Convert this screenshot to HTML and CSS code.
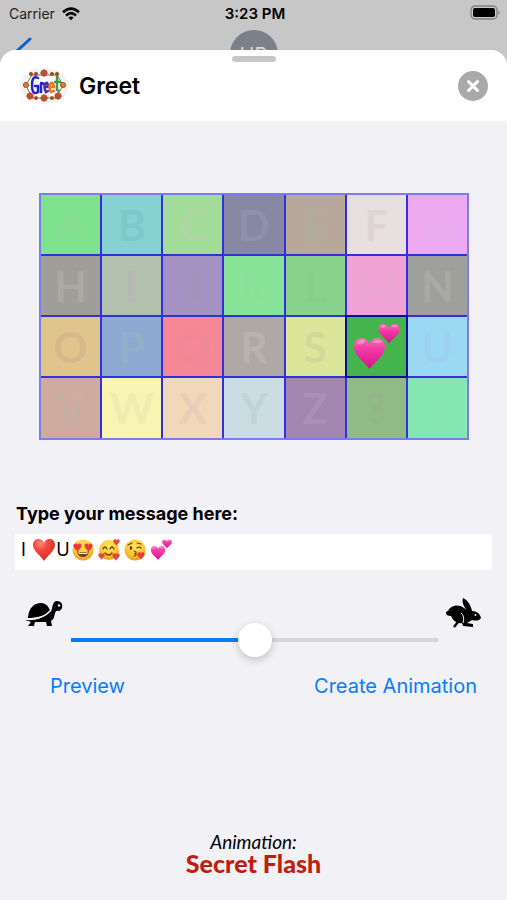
FILE: index.html
```
<!DOCTYPE html>
<html lang="en">
<head>
<meta charset="utf-8">
<meta name="viewport" content="width=device-width, initial-scale=1">
<title>Greet</title>
<link rel="stylesheet" href="styles.css">
</head>
<body>
<svg class="defs" aria-hidden="true">
  <defs>
    <radialGradient id="red" cx=".35" cy=".2" r=".8"><stop offset="0" stop-color="#ff8a7a"/><stop offset=".4" stop-color="#f2483c"/><stop offset="1" stop-color="#d92b25"/></radialGradient>
    <linearGradient id="pink" x1="0" y1="0" x2="0" y2="1"><stop offset="0" stop-color="#ff6fb8"/><stop offset=".35" stop-color="#f23aa6"/><stop offset="1" stop-color="#d8128a"/></linearGradient>
    <radialGradient id="yellow" cx=".5" cy=".3" r=".7"><stop offset="0" stop-color="#ffe65c"/><stop offset=".6" stop-color="#fdc935"/><stop offset="1" stop-color="#ef9c1c"/></radialGradient>
    <symbol id="heart" viewBox="0 0 24 24"><path d="M12 23C9 18 1 13 1 7C1 3 3.500 1 6.500 1C9 1 11 2.500 12 5C13 2.500 15 1 17.500 1C20.500 1 23 3 23 7C23 13 15 18 12 23Z"/></symbol>
    <symbol id="two-hearts" viewBox="0 0 48 48">
      <g fill="url(#pink)"><path d="M17.500 46C12 38 2 33 2 24C2 18.500 5 15 9.500 15C13 15 16 17 17.500 21C19 17 22 15 25.500 15C30 15 33 18.500 33 24C33 33 23 38 17.500 46Z"/><path d="M37 20.500C34 15 27 12 26.500 7C26.200 3.500 28 1 31 1C34 1 36 2.500 37 5C38 2.500 40 1 43 1C46 1 48 3.500 47.700 7C47 12.500 40 15.500 37 20.500Z"/></g>
      <g fill="#ffadd8" opacity=".6"><ellipse cx="9" cy="19" rx="4" ry="2" transform="rotate(-20 9 19)"/><ellipse cx="25.500" cy="18.500" rx="4" ry="1.600"/><ellipse cx="31" cy="3.500" rx="2.500" ry="1.100"/><ellipse cx="42.500" cy="3.200" rx="2.500" ry="1.100"/></g>
    </symbol>
    <symbol id="flower" viewBox="-5 -5 10 10"><g fill="#dd3b2b"><circle cy="-3" r="1.700"/><circle cy="3" r="1.700"/><circle cx="3" r="1.700"/><circle cx="-3" r="1.700"/><circle cx="2.100" cy="2.100" r="1.500"/><circle cx="-2.100" cy="2.100" r="1.500"/><circle cx="2.100" cy="-2.100" r="1.500"/><circle cx="-2.100" cy="-2.100" r="1.500"/></g><circle r="2" fill="#50802c"/></symbol>
  </defs>
</svg>

<header class="status">
  <div class="carrier">Carrier
    <svg width="18" height="14" viewBox="0 0 18 14" fill="none" stroke="#000" stroke-width="2.600" aria-hidden="true"><path d="M1 5.200Q9-2 17 5.200M4 8.400Q9 4 14 8.400"/><path d="M6.400 10.500Q9 8.300 11.600 10.500L9 13.300Z" fill="#000" stroke="none"/></svg>
  </div>
  <div class="time">3:23 PM</div>
  <svg class="battery" width="31" height="15" viewBox="0 0 31 15" role="img" aria-label="Battery full"><rect x="1" y="1" width="26" height="13" rx="4" fill="none" stroke="#808080" stroke-width="1.300"/><rect x="3" y="3" width="22" height="9" rx="2"/><path d="M28.500 5.200Q31 7.500 28.500 9.800Z" fill="#808080"/></svg>
  <svg class="back" width="18" height="26" viewBox="0 0 18 26" aria-hidden="true"><path d="M16 2L3 14L16 26" fill="none" stroke="#0a62cc" stroke-width="3" stroke-linecap="round"/></svg>
  <div class="avatar" aria-hidden="true">HB</div>
</header>

<main class="sheet">
  <div class="title-bar">
    <span class="grabber"></span>
    <svg class="logo" width="50" height="38" viewBox="0 0 50 38" role="img" aria-label="Greet logo">
      <ellipse cx="25" cy="19" rx="24.500" ry="18" fill="#f3f3f3"/>
      <path d="M7 18L13 8H38L44 18L37 31H13Z" fill="#fff" stroke="#66864b"/>
      <use href="#flower" x="21" y="2" width="8" height="8"/><use href="#flower" x="21" y="27" width="8" height="8"/>
      <use href="#flower" x="7" y="25" width="8" height="8"/><use href="#flower" x="35" y="25" width="8" height="8"/>
      <g fill="#e47a22" stroke="#8d642d"><circle cx="7" cy="18" r="2.600"/><circle cx="44" cy="18" r="2.600"/></g>
      <g fill="#5b6d28" stroke="#c33" stroke-width=".8"><circle cx="12" cy="7" r="1.700"/><circle cx="17" cy="7" r="1.700"/><circle cx="33" cy="7" r="1.700"/><circle cx="38" cy="7" r="1.700"/><circle cx="17" cy="31" r="1.600"/><circle cx="33" cy="31" r="1.600"/></g>
      <g fill="none" stroke-width="2.500" stroke-linecap="round"><path d="M19 11Q13 8 13 18Q13 29 19 25V19H16M22 16V25M22 18Q24 15 25 17" stroke="#2722d8"/><path d="M26 20H29Q29 15 27 16Q24 20 27 25L29 24" stroke="#4d2caf"/><path d="M31 20H35Q34 15 32 16Q29 20 32 25L35 24" stroke="#ed7820"/><path d="M38 10V23L40 24M36 15H41" stroke="#3b9c44"/></g>
    </svg>
    <h1>Greet</h1>
    <button class="close" type="button" aria-label="Close"><svg width="14" height="14" viewBox="0 0 14 14"><path d="M2.500 2.500L11.500 11.500M11.500 2.500L2.500 11.500" stroke="#fff" stroke-width="3" stroke-linecap="round"/></svg></button>
  </div>

  <div class="board">
    <div class="c1">A</div><div class="c2">B</div><div class="c3">C</div><div class="c4">D</div><div class="c5">E</div><div class="c6">F</div><div class="c7">G</div>
    <div class="c8">H</div><div class="c9">I</div><div class="c10">J</div><div class="c11">K</div><div class="c12">L</div><div class="c13">M</div><div class="c14">N</div>
    <div class="c15">O</div><div class="c16">P</div><div class="c17">Q</div><div class="c18">R</div><div class="c19">S</div><div class="active"><svg width="48" height="48" role="img" aria-label="Two hearts"><use href="#two-hearts"/></svg></div><div class="c21">U</div>
    <div class="c22">V</div><div class="c23">W</div><div class="c24">X</div><div class="c25">Y</div><div class="c26">Z</div><div class="c27">?</div><div class="c28">!</div>
  </div>

  <form class="controls">
    <label for="message">Type your message here:</label>
    <div class="field">
      <input id="message" type="text" value="I      U">
      <div class="emoji" aria-hidden="true">
        <svg class="love" width="24" height="24"><use href="#heart" fill="url(#red)"/></svg>
        <svg width="22" height="22" viewBox="0 0 22 22"><circle cx="11" cy="11" r="10.500" fill="url(#yellow)"/><path d="M5 12Q11 15 17 12Q16 18 11 18Q6 18 5 12Z" fill="#70401c"/><path d="M6 13Q11 15.500 16 13L15 15H7Z" fill="#fff"/><use href="#heart" x="1" y="4" width="9" height="9" fill="#e83a38"/><use href="#heart" x="12" y="4" width="9" height="9" fill="#e83a38"/></svg>
        <svg width="22" height="22" viewBox="0 0 22 22"><circle cx="11" cy="11" r="10" fill="url(#yellow)"/><path d="M5 10Q7 6 9 10M12 10Q14 6 16 10M7 14Q11 18 14 14" fill="none" stroke="#70401c" stroke-width="1.300" stroke-linecap="round"/><g fill="#e6453d"><use href="#heart" x="15" y="0" width="7" height="7"/><use href="#heart" x="0" y="14" width="7" height="7"/><use href="#heart" x="14" y="14" width="8" height="8"/></g></svg>
        <svg width="22" height="22" viewBox="0 0 22 22"><circle cx="11" cy="11" r="10.500" fill="url(#yellow)"/><ellipse cx="7" cy="9" rx="1.300" ry="2" fill="#70401c"/><path d="M13 9Q15 7 17 9M4 6L8 4M13 4L17 5M10 12Q14 13 11 14.500Q14 16 10 17" fill="none" stroke="#70401c" stroke-width="1.200" stroke-linecap="round"/><use href="#heart" x="13" y="13" width="8" height="8" fill="#e83a38"/></svg>
        <svg width="22" height="22"><use href="#two-hearts"/></svg>
      </div>
    </div>
    <div class="speed">
      <svg width="38" height="30" viewBox="0 -4 38 30" role="img" aria-label="Slow"><path d="M3 15C4 6 9 1 16 1C21 1 24 5 25 9C20 14 12 16 3 16Z"/><path d="M0 18C12 19 20 15 26 9C28 6 27-1 32-1C36-1 38 2 37 6C36 9 33 9 31 9C29 12 30 17 26 19L27 24H22L21 20H10L9 24H3L6 20Z"/><path d="M2 17.500C13 17.500 21 14 26 8" fill="none" stroke="#f2f1f6" stroke-width="1.200"/><circle cx="34" cy="3.500" r="1.200" fill="#f2f1f6"/></svg>
      <input type="range" min="0" max="100" value="50" aria-label="Animation speed">
      <svg width="36" height="32" viewBox="0 0 36 32" role="img" aria-label="Fast"><path d="M2 13C4 8 12 5 18 10L21 12C17 8 16 4 17 0C22 2 25 8 26 13C31 13 34 16 35 20C33 23 30 23 26 22L21 25L27 26V29L17 28L16 25C12 26 7 23 5 18C2 18 0 17 0 15Q0 13 2 13Z"/><path d="M12 24L8 29" stroke="#000" stroke-width="2.500"/><path d="M15 15Q19 18 17 25" fill="none" stroke="#f2f1f6"/><circle cx="29.500" cy="17" r="1" fill="#f2f1f6"/></svg>
    </div>
    <div class="actions"><button type="button">Preview</button><button type="button">Create Animation</button></div>
  </form>

  <footer><span>Animation:</span><strong>Secret Flash</strong></footer>
</main>
</body>
</html>
```
FILE: styles.css
```
* { box-sizing: border-box; }
body {
  margin: 0;
  min-height: 100vh;
  display: flex;
  flex-direction: column;
  background: #c7c7c7;
  color: #000;
  font-family: Inter, "Liberation Sans", sans-serif;
}
button { padding: 0; border: 0; background: none; font: inherit; }
svg { display: block; flex: none; }
.defs { position: absolute; width: 0; height: 0; }

.status {
  position: relative;
  height: 50px;
  padding: 5px 6px 0 9px;
  display: grid;
  grid-template-columns: 1fr auto 1fr;
  align-items: start;
  overflow: hidden;
  font-size: 14px;
  line-height: 18px;
}
.carrier { display: flex; align-items: center; gap: 7px; color: #222; }
.time { font-size: 15px; font-weight: 600; }
.battery { justify-self: end; }
.back { position: absolute; left: 14px; top: 37px; }
.avatar {
  position: absolute;
  top: 30px;
  left: calc(50% - 24px);
  width: 48px;
  height: 48px;
  border-radius: 50%;
  background: #7c808a;
  color: #d5d7dc;
  font-size: 20px;
  line-height: 50px;
  text-align: center;
}

.sheet {
  flex: 1;
  display: flex;
  flex-direction: column;
  overflow: hidden;
  border-radius: 16px 16px 0 0;
  background: #f2f1f6;
}
.title-bar {
  position: relative;
  display: flex;
  align-items: center;
  gap: 10px;
  height: 71px;
  padding: 0 19px;
  background: #fff;
}
.grabber {
  position: absolute;
  top: 6px;
  left: calc(50% - 22px);
  width: 44px;
  height: 6px;
  border-radius: 3px;
  background: #c7c7c7;
}
h1 { flex: 1; margin: 0; font-size: 23px; font-weight: 600; }
.close {
  display: grid;
  place-items: center;
  width: 30px;
  height: 30px;
  border-radius: 50%;
  background: #a9a9a9;
}

.board {
  display: grid;
  grid-template-columns: repeat(7, 1fr);
  gap: 2px;
  margin: 72px 38px 0 39px;
  border: 2px solid #7d7bf0;
  background: #332fe0;
}
.board div {
  display: grid;
  place-items: center;
  aspect-ratio: 1;
  font-family: Lato, sans-serif;
  font-size: 42px;
  font-weight: 700;
  line-height: 48px;
}
.c1 { background: #7fe28d; color: #85de94; }
.c2 { background: #86d2d2; color: #7dc8cb; }
.c3 { background: #a3dc99; color: #aed5a3; }
.c4 { background: #8888a3; color: #8f8fae; }
.c5 { background: #b8a89c; color: #b0ada0; }
.c6 { background: #e7dfe0; color: #dfd4d5; }
.c7 { background: #eeaaf0; color: #e9adeb; }
.c8 { background: #9f9e99; color: #aaa9a4; }
.c9 { background: #b1c1ad; color: #b9b7b2; }
.c10 { background: #a392c2; color: #a095b5; }
.c11 { background: #87e498; color: #8ae19a; }
.c12 { background: #89d28d; color: #87ce8c; }
.c13 { background: #f1a3d6; color: #eba6d3; }
.c14 { background: #9f9f9b; color: #a9a9a6; }
.c15 { background: #dfc48c; color: #d9b78b; }
.c16 { background: #8eaad2; color: #92b0cc; }
.c17 { background: #f58894; color: #ee8995; }
.c18 { background: #afa8a4; color: #b8b3b0; }
.c19 { background: #dce69a; color: #d0da98; }
.board .active { background: #44b54d; outline: 2px solid #0c0c9c; }
.c21 { background: #9bd9f3; color: #9ed0f2; }
.c22 { background: #cfaa9e; color: #c6afa4; }
.c23 { background: #f8f4b1; color: #efecb2; }
.c24 { background: #f1d8b8; color: #e9ceb9; }
.c25 { background: #cbdde3; color: #c1d3da; }
.c26 { background: #a286ae; color: #aa8fb7; }
.c27 { background: #8fbb84; color: #94b388; }
.c28 { background: #84e7b1; color: #88e3b2; }

.controls { padding: 62px 15px 0; }
.controls label { display: block; padding-left: 1px; font-size: 18px; font-weight: 700; line-height: 24px; }
.field { position: relative; margin-top: 8px; }
.field input {
  display: block;
  width: 100%;
  height: 36px;
  padding: 0 6px 4px;
  border: 0;
  background: #fff;
  color: #000;
  font: 18px/24px Inter, sans-serif;
  white-space: pre;
}
.emoji {
  position: absolute;
  left: 17px;
  top: 4px;
  display: flex;
  align-items: center;
  gap: 4px;
  pointer-events: none;
}
.love { margin-right: 12px; }
.speed {
  display: grid;
  grid-template-columns: 38px 1fr 36px;
  gap: 8px;
  padding: 28px 10px 0;
  height: 88px;
}
.speed input {
  appearance: none;
  width: 100%;
  height: 34px;
  margin: 25px 0 0;
  background: linear-gradient(to right, #0a7aff 50%, #d5d5da 50%) center / 100% 4px no-repeat;
}
.speed input::-webkit-slider-thumb {
  appearance: none;
  width: 34px;
  height: 34px;
  border-radius: 50%;
  background: #fff;
  box-shadow: 0 3px 8px rgba(0, 0, 0, .2);
}
.actions {
  display: flex;
  justify-content: space-between;
  padding: 16px 15px 0 35px;
  color: #087dfb;
  font-size: 20px;
  line-height: 24px;
}
.actions button { color: inherit; }
footer {
  display: flex;
  flex-direction: column;
  align-items: center;
  margin-top: auto;
  padding-bottom: 26px;
  font-family: Lato, sans-serif;
}
footer span { font-size: 19px; line-height: 20px; font-style: italic; }
footer strong { color: #bd1f0d; font-size: 25px; line-height: 22px; font-weight: 900; }
```
